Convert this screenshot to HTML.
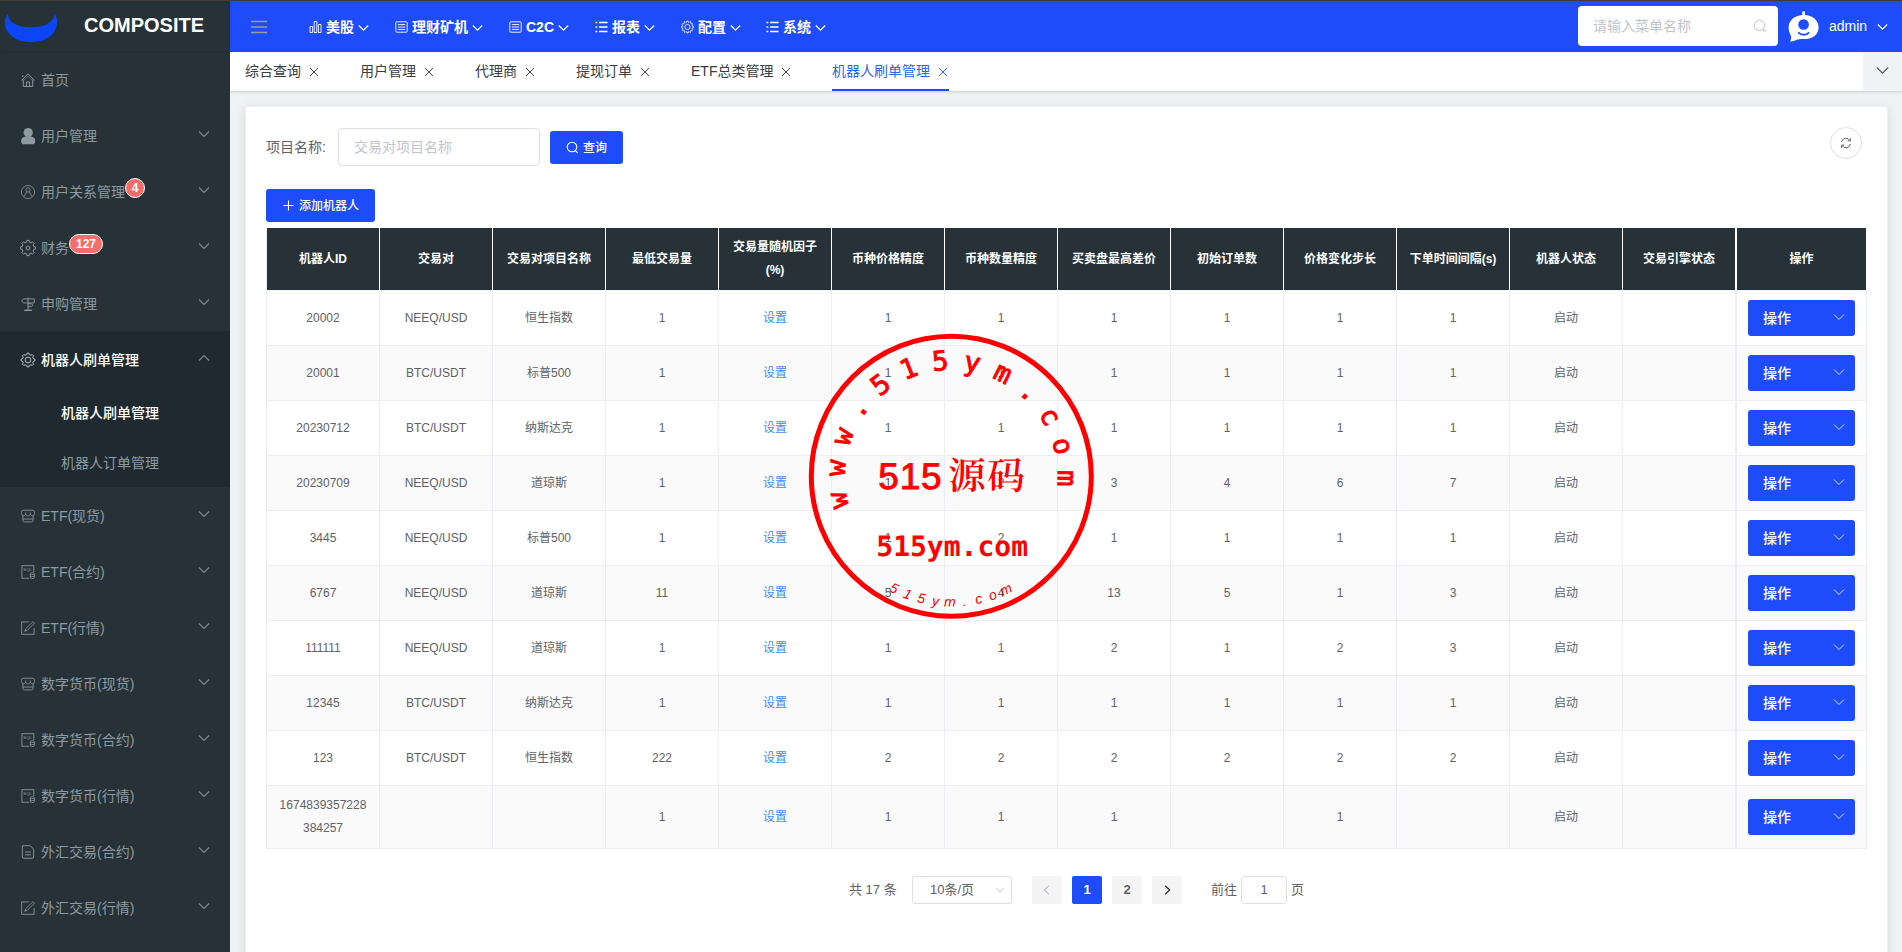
<!DOCTYPE html>
<html lang="zh-CN">
<head>
<meta charset="utf-8">
<title>COMPOSITE</title>
<style>
*{box-sizing:border-box;margin:0;padding:0}
html,body{width:1902px;height:952px;overflow:hidden}
body{font-family:"Liberation Sans","Noto Sans CJK SC",sans-serif;font-size:14px;color:#606266;background:#f0f3f4;position:relative}
.abs{position:absolute}
/* top line */
#topline{left:0;top:0;width:1902px;height:1px;background:#3c3c3c;z-index:50}
/* sidebar */
#side{left:0;top:0;width:230px;height:952px;background:#263238;z-index:10}
#logo{left:0;top:0;width:230px;height:51px;background:#263238;box-shadow:0 1px 3px rgba(0,0,0,.12)}
#logo .t{position:absolute;left:84px;top:13px;font-weight:bold;font-size:20px;line-height:24px;color:#fff;letter-spacing:0}
.mi{position:absolute;left:0;width:230px;height:56px;line-height:56px;color:#8d9aa1;font-size:14px}
.mi .ic{position:absolute;left:21px;top:22px;overflow:visible}
.mi .tx{position:absolute;left:41px;top:1px;white-space:nowrap}
.mi .ar{position:absolute;left:198px;top:23px;width:12px;height:8px;color:#7b8990}
.mi.act{color:#fff;font-weight:500}
.mi.act .ic{color:#c3c9cc}
.mi.act .ar{color:#7b8990}
.sub{position:absolute;left:0;width:230px;height:50px;line-height:52px;color:#8d9aa1;font-size:14px;padding-left:61px;white-space:nowrap}
.sub.act{color:#fff;font-weight:500}
#openbg{left:0;top:331px;width:230px;height:156px;background:#1f2a30}
.badge{position:absolute;height:20px;min-width:20px;border-radius:10px;border:1px solid #fff;background:#f56c6c;color:#fff;font-size:12px;line-height:18px;text-align:center;padding:0 5px;font-weight:bold}
/* header */
#head{left:230px;top:0;width:1672px;height:52px;background:#1f4cfb;z-index:5}
.nav{position:absolute;top:0;height:52px;line-height:54px;color:#fff;font-size:14px;font-weight:bold;white-space:nowrap}
.nav svg{position:absolute}
#search{left:1348px;top:6px;width:200px;height:40px;background:#fff;border-radius:4px}
#search .ph{position:absolute;left:15px;top:0;line-height:40px;color:#c0c4cc;font-size:14px}
/* tabs */
#tabs{left:230px;top:52px;width:1672px;height:39px;background:#fff;box-shadow:0 1px 3px 0 rgba(0,0,0,.14),0 0 3px 0 rgba(0,0,0,.04);z-index:4}
.tab{position:absolute;top:0;height:39px;line-height:39px;font-size:14px;color:#3a3c40;white-space:nowrap}
.tab .x{display:inline-block;width:14px;margin-left:5px;text-align:center;font-size:12px;color:#555}
.tab.on{color:#2f63ee}
#tabmore{left:1633px;top:0;width:39px;height:39px;background:#f0f3f4}
/* card */
#card{left:245px;top:106px;width:1643px;height:900px;background:#fff;border-radius:3px;border:1px solid #ebeef5;box-shadow:0 2px 12px 0 rgba(0,0,0,.1)}
.btn{position:absolute;background:#1f4cfb;color:#fff;border-radius:3px;font-size:12px;font-weight:500;text-align:center;white-space:nowrap}
/* table */
#tb{left:266px;top:228px;width:1601px;border-collapse:separate;border-spacing:0;table-layout:fixed;font-size:12px;border-left:1px solid #ebeef5;border-top:0}
#tb th{background:#263238;color:#fff;font-weight:bold;height:63px;border-bottom:1px solid #f3f5fa;line-height:23px;text-align:center;border-right:1px solid #fff;padding:0 10px;font-size:12px}
#tb td{height:55px;text-align:center;border-right:1px solid #ebeef5;border-bottom:1px solid #ebeef5;color:#606266;line-height:23px;padding:0 10px;position:relative}
#tb tr.s td{background:#fafafa}
#tb td a{color:#3f8cf0;text-decoration:none}
#tb tr.last td{height:63px}
#tb th:last-child,#tb td:last-child{border-left:1px solid #ebeef5}
#tb th:last-child{border-left-color:#fff}
.op{position:absolute;left:11px;top:9px;width:107px;height:36px;background:#1f4cfb;border-radius:3px;color:#fff;font-size:14px;line-height:36px;text-align:left;padding-left:15px;font-weight:500}
.op svg{position:absolute;left:85px;top:13px}
/* pagination */
.pg{position:absolute;top:876px;height:28px;line-height:28px;font-size:13px;color:#606266;white-space:nowrap}
.pb{position:absolute;top:876px;width:30px;height:28px;border-radius:2px;background:#f4f4f5;color:#606266;font-weight:bold;font-size:13px;text-align:center;line-height:28px}
</style>
</head>
<body>
<div id="topline" class="abs"></div>

<!-- SIDEBAR -->
<div id="side" class="abs">
  <div id="openbg" class="abs"></div>
  <div id="logo" class="abs">
    <svg class="abs" style="left:0;top:0" width="64" height="51" viewBox="0 0 64 51"><path d="M7.8 13.5 C4 18 3.5 27 9 33.5 C14.5 40 23 42 31 42 C39 42 47.5 40 53 33.5 C58.5 27 58 18 54.3 13.5 C54 20 49 27.2 31 27.2 C13 27.2 8 20 7.8 13.5 Z" fill="#0b45f5"/></svg>
    <div class="t">COMPOSITE</div>
  </div>
  <!-- menu items inserted below -->
  <div class="mi" style="top:51px"><svg class="ic" style="" width="14" height="14" viewBox="0 0 16 16"><path d="M0.5 8.6 L8 1 L15.5 8.6 M2 4.6 V2.6 M2.6 7.6 V15.4 H13.4 V7.6 M6.2 15.4 V10.2 H9.8 V15.4" fill="none" stroke="currentColor" stroke-width="1.1"/><path d="M1.6 10 L8 3.6 L14.4 10" fill="none" stroke="currentColor" stroke-width="0.8" opacity="0.7"/></svg><span class="tx">首页</span></div>
  <div class="mi" style="top:107px"><svg class="ic" style="left:21px;top:21px;" width="14.4" height="16.2" viewBox="0 0 16 18"><circle cx="8" cy="5" r="5.1" fill="currentColor"/><path d="M0.2 14.6 C0.2 11 2.6 9.3 8 9.3 C13.4 9.3 15.8 11 15.8 14.6 C15.8 17 14.6 18 12.6 18 H3.4 C1.4 18 0.2 17 0.2 14.6Z" fill="currentColor"/></svg><span class="tx">用户管理</span><svg class="ar" width="12" height="8" viewBox="0 0 12 8"><path d="M1 1.5 L6 6.5 L11 1.5" fill="none" stroke="currentColor" stroke-width="1.1"/></svg></div>
  <div class="mi" style="top:163px"><svg class="ic" style="" width="14" height="14" viewBox="0 0 16 16"><circle cx="8" cy="8" r="7.5" fill="none" stroke="currentColor" stroke-width="0.9"/><circle cx="8" cy="5.6" r="2.5" fill="none" stroke="currentColor" stroke-width="0.9"/><path d="M3.4 13.4 L6.6 7.8 M12.6 13.4 L9.4 7.8" fill="none" stroke="currentColor" stroke-width="0.9"/></svg><span class="tx">用户关系管理</span><span class="badge" style="left:125px;top:15px;width:20px;padding:0">4</span><svg class="ar" width="12" height="8" viewBox="0 0 12 8"><path d="M1 1.5 L6 6.5 L11 1.5" fill="none" stroke="currentColor" stroke-width="1.1"/></svg></div>
  <div class="mi" style="top:219px"><svg class="ic" style="left:20px;top:21px;" width="16" height="16" viewBox="0 0 16 16"><path d="M15.61 6.86 L15.61 9.14 L13.73 9.42 L13.05 11.04 L14.19 12.57 L12.57 14.19 L11.04 13.05 L9.42 13.73 L9.14 15.61 L6.86 15.61 L6.58 13.73 L4.96 13.05 L3.43 14.19 L1.81 12.57 L2.95 11.04 L2.27 9.42 L0.39 9.14 L0.39 6.86 L2.27 6.58 L2.95 4.96 L1.81 3.43 L3.43 1.81 L4.96 2.95 L6.58 2.27 L6.86 0.39 L9.14 0.39 L9.42 2.27 L11.04 2.95 L12.57 1.81 L14.19 3.43 L13.05 4.96 L13.73 6.58Z" fill="none" stroke="currentColor" stroke-width="1.0" stroke-linejoin="round"/><circle cx="8" cy="8" r="1.9" fill="none" stroke="currentColor" stroke-width="1.0"/></svg><span class="tx">财务</span><span class="badge" style="left:69px;top:15px;width:34px;padding:0">127</span><svg class="ar" width="12" height="8" viewBox="0 0 12 8"><path d="M1 1.5 L6 6.5 L11 1.5" fill="none" stroke="currentColor" stroke-width="1.1"/></svg></div>
  <div class="mi" style="top:275px"><svg class="ic" style="" width="14" height="14" viewBox="0 0 16 16"><path d="M8 0.6 V14.6" stroke="currentColor" stroke-width="1.2" fill="none"/><path d="M3.6 15.2 H12.4" stroke="currentColor" stroke-width="1.6" fill="none"/><path d="M8 2.2 H15.2 V6.8 H2.8 L0.8 4.5 L2.8 2.2 Z" fill="none" stroke="currentColor" stroke-width="1" stroke-linejoin="round"/><path d="M8 7.8 H11.8 L13.6 9.4 L11.8 11 H8" fill="none" stroke="currentColor" stroke-width="1" stroke-linejoin="round"/></svg><span class="tx">申购管理</span><svg class="ar" width="12" height="8" viewBox="0 0 12 8"><path d="M1 1.5 L6 6.5 L11 1.5" fill="none" stroke="currentColor" stroke-width="1.1"/></svg></div>
  <div class="mi act" style="top:331px"><svg class="ic" style="" width="14" height="14" viewBox="0 0 16 16"><path d="M15.81 6.83 L15.81 9.17 L14.11 9.52 L13.40 11.25 L14.35 12.69 L12.69 14.35 L11.25 13.40 L9.52 14.11 L9.17 15.81 L6.83 15.81 L6.48 14.11 L4.75 13.40 L3.31 14.35 L1.65 12.69 L2.60 11.25 L1.89 9.52 L0.19 9.17 L0.19 6.83 L1.89 6.48 L2.60 4.75 L1.65 3.31 L3.31 1.65 L4.75 2.60 L6.48 1.89 L6.83 0.19 L9.17 0.19 L9.52 1.89 L11.25 2.60 L12.69 1.65 L14.35 3.31 L13.40 4.75 L14.11 6.48Z" fill="none" stroke="currentColor" stroke-width="1.1" stroke-linejoin="round"/><circle cx="8" cy="8" r="3.3" fill="none" stroke="currentColor" stroke-width="1.1"/></svg><span class="tx">机器人刷单管理</span><svg class="ar" width="12" height="8" viewBox="0 0 12 8"><path d="M1 6.5 L6 1.5 L11 6.5" fill="none" stroke="currentColor" stroke-width="1.1"/></svg></div>
  <div class="sub act" style="top:387px">机器人刷单管理</div>
  <div class="sub" style="top:437px">机器人订单管理</div>
  <div class="mi" style="top:487px"><svg class="ic" style="" width="14" height="14" viewBox="0 0 16 16"><path d="M2.8 1.4 H13.2 C14.6 1.4 15.4 2.4 15.4 3.8 V5.6 C15.4 7 14.4 7.8 13.2 7.8 C12 7.8 11 7 10.6 6 C10.2 7 9.2 7.8 8 7.8 C6.8 7.8 5.8 7 5.4 6 C5 7 4 7.8 2.8 7.8 C1.6 7.8 0.6 7 0.6 5.6 V3.8 C0.6 2.4 1.4 1.4 2.8 1.4 Z M5.4 4 V6 M10.6 4 V6" fill="none" stroke="currentColor" stroke-width="1" stroke-linejoin="round"/><path d="M2.2 8 V13 C2.2 14.2 2.8 14.8 4 14.8 H12 C13.2 14.8 13.8 14.2 13.8 13 V8 M2.2 11.4 H13.8" fill="none" stroke="currentColor" stroke-width="1"/></svg><span class="tx">ETF(现货)</span><svg class="ar" width="12" height="8" viewBox="0 0 12 8"><path d="M1 1.5 L6 6.5 L11 1.5" fill="none" stroke="currentColor" stroke-width="1.1"/></svg></div>
  <div class="mi" style="top:543px"><svg class="ic" style="" width="14" height="14" viewBox="0 0 16 16"><path d="M9.6 15.2 H1 V0.8 H14.6 V8" fill="none" stroke="currentColor" stroke-width="1"/><text x="2.6" y="6.6" font-size="5" font-family="Liberation Sans,sans-serif" fill="currentColor">SQL</text><rect x="10.6" y="8.8" width="4.8" height="6.6" rx="1.8" fill="none" stroke="currentColor" stroke-width="0.9"/><path d="M10.6 11 H15.4 M10.6 13.2 H15.4" stroke="currentColor" stroke-width="0.8"/></svg><span class="tx">ETF(合约)</span><svg class="ar" width="12" height="8" viewBox="0 0 12 8"><path d="M1 1.5 L6 6.5 L11 1.5" fill="none" stroke="currentColor" stroke-width="1.1"/></svg></div>
  <div class="mi" style="top:599px"><svg class="ic" style="" width="14" height="14" viewBox="0 0 16 16"><path d="M15 8 V15.2 H0.8 V1 H9" fill="none" stroke="currentColor" stroke-width="1"/><path d="M4.2 11.8 L5.4 8.8 L13.6 0.8 L15.4 2.6 L7.2 10.6 Z" fill="none" stroke="currentColor" stroke-width="0.9" stroke-linejoin="round"/></svg><span class="tx">ETF(行情)</span><svg class="ar" width="12" height="8" viewBox="0 0 12 8"><path d="M1 1.5 L6 6.5 L11 1.5" fill="none" stroke="currentColor" stroke-width="1.1"/></svg></div>
  <div class="mi" style="top:655px"><svg class="ic" style="" width="14" height="14" viewBox="0 0 16 16"><path d="M2.8 1.4 H13.2 C14.6 1.4 15.4 2.4 15.4 3.8 V5.6 C15.4 7 14.4 7.8 13.2 7.8 C12 7.8 11 7 10.6 6 C10.2 7 9.2 7.8 8 7.8 C6.8 7.8 5.8 7 5.4 6 C5 7 4 7.8 2.8 7.8 C1.6 7.8 0.6 7 0.6 5.6 V3.8 C0.6 2.4 1.4 1.4 2.8 1.4 Z M5.4 4 V6 M10.6 4 V6" fill="none" stroke="currentColor" stroke-width="1" stroke-linejoin="round"/><path d="M2.2 8 V13 C2.2 14.2 2.8 14.8 4 14.8 H12 C13.2 14.8 13.8 14.2 13.8 13 V8 M2.2 11.4 H13.8" fill="none" stroke="currentColor" stroke-width="1"/></svg><span class="tx">数字货币(现货)</span><svg class="ar" width="12" height="8" viewBox="0 0 12 8"><path d="M1 1.5 L6 6.5 L11 1.5" fill="none" stroke="currentColor" stroke-width="1.1"/></svg></div>
  <div class="mi" style="top:711px"><svg class="ic" style="" width="14" height="14" viewBox="0 0 16 16"><path d="M9.6 15.2 H1 V0.8 H14.6 V8" fill="none" stroke="currentColor" stroke-width="1"/><text x="2.6" y="6.6" font-size="5" font-family="Liberation Sans,sans-serif" fill="currentColor">SQL</text><rect x="10.6" y="8.8" width="4.8" height="6.6" rx="1.8" fill="none" stroke="currentColor" stroke-width="0.9"/><path d="M10.6 11 H15.4 M10.6 13.2 H15.4" stroke="currentColor" stroke-width="0.8"/></svg><span class="tx">数字货币(合约)</span><svg class="ar" width="12" height="8" viewBox="0 0 12 8"><path d="M1 1.5 L6 6.5 L11 1.5" fill="none" stroke="currentColor" stroke-width="1.1"/></svg></div>
  <div class="mi" style="top:767px"><svg class="ic" style="" width="14" height="14" viewBox="0 0 16 16"><path d="M9.6 15.2 H1 V0.8 H14.6 V8" fill="none" stroke="currentColor" stroke-width="1"/><text x="2.6" y="6.6" font-size="5" font-family="Liberation Sans,sans-serif" fill="currentColor">SQL</text><rect x="10.6" y="8.8" width="4.8" height="6.6" rx="1.8" fill="none" stroke="currentColor" stroke-width="0.9"/><path d="M10.6 11 H15.4 M10.6 13.2 H15.4" stroke="currentColor" stroke-width="0.8"/></svg><span class="tx">数字货币(行情)</span><svg class="ar" width="12" height="8" viewBox="0 0 12 8"><path d="M1 1.5 L6 6.5 L11 1.5" fill="none" stroke="currentColor" stroke-width="1.1"/></svg></div>
  <div class="mi" style="top:823px"><svg class="ic" style="" width="14" height="14" viewBox="0 0 16 16"><path d="M1.6 0.8 H10.6 L14.4 4.6 V13.8 C14.4 14.8 13.8 15.2 13 15.2 H3 C2.2 15.2 1.6 14.8 1.6 13.8 Z M4.6 8 H11.4 M4.6 11.2 H11.4" fill="none" stroke="currentColor" stroke-width="1.05" stroke-linejoin="round"/></svg><span class="tx">外汇交易(合约)</span><svg class="ar" width="12" height="8" viewBox="0 0 12 8"><path d="M1 1.5 L6 6.5 L11 1.5" fill="none" stroke="currentColor" stroke-width="1.1"/></svg></div>
  <div class="mi" style="top:879px"><svg class="ic" style="" width="14" height="14" viewBox="0 0 16 16"><path d="M15 8 V15.2 H0.8 V1 H9" fill="none" stroke="currentColor" stroke-width="1"/><path d="M4.2 11.8 L5.4 8.8 L13.6 0.8 L15.4 2.6 L7.2 10.6 Z" fill="none" stroke="currentColor" stroke-width="0.9" stroke-linejoin="round"/></svg><span class="tx">外汇交易(行情)</span><svg class="ar" width="12" height="8" viewBox="0 0 12 8"><path d="M1 1.5 L6 6.5 L11 1.5" fill="none" stroke="currentColor" stroke-width="1.1"/></svg></div>
</div>

<!-- HEADER -->
<div id="head" class="abs">
  <svg class="abs" style="left:21px;top:20px" width="16" height="14" viewBox="0 0 16 14"><path d="M0 1.5 H16 M0 7 H16 M0 12.5 H16" stroke="#9a9a9a" stroke-width="1.3"/></svg>
  <div class="nav" style="left:79px;width:60px"><svg style="left:0;top:20px" width="13" height="14" viewBox="0 0 13 14"><path d="M1 6.5 H3.6 V12.5 H1 Z M5.2 1.5 H7.8 V12.5 H5.2 Z M9.4 4.5 H12 V12.5 H9.4 Z" fill="none" stroke="#fff" stroke-width="0.9" stroke-linejoin="round"/></svg><span style="position:absolute;left:17px;top:0">美股</span><svg style="left:49px;top:24px" width="11" height="8" viewBox="0 0 11 8"><path d="M0.8 1.5 L5.5 6.2 L10.2 1.5" fill="none" stroke="#fff" stroke-width="1.2"/></svg></div>
  <div class="nav" style="left:165px;width:88px"><svg style="left:0;top:20px" width="13" height="14" viewBox="0 0 13 14"><rect x="0.8" y="1.8" width="11.4" height="10.4" rx="0.8" fill="none" stroke="#fff" stroke-width="0.9"/><path d="M2.8 4.6 H10.2 M2.8 7 H10.2 M2.8 9.4 H10.2" stroke="#fff" stroke-width="0.9"/></svg><span style="position:absolute;left:17px;top:0">理财矿机</span><svg style="left:77px;top:24px" width="11" height="8" viewBox="0 0 11 8"><path d="M0.8 1.5 L5.5 6.2 L10.2 1.5" fill="none" stroke="#fff" stroke-width="1.2"/></svg></div>
  <div class="nav" style="left:279px;width:60px"><svg style="left:0;top:20px" width="13" height="14" viewBox="0 0 13 14"><rect x="0.8" y="1.8" width="11.4" height="10.4" rx="0.8" fill="none" stroke="#fff" stroke-width="0.9"/><path d="M2.8 4.6 H10.2 M2.8 7 H10.2 M2.8 9.4 H10.2" stroke="#fff" stroke-width="0.9"/></svg><span style="position:absolute;left:17px;top:0">C2C</span><svg style="left:49px;top:24px" width="11" height="8" viewBox="0 0 11 8"><path d="M0.8 1.5 L5.5 6.2 L10.2 1.5" fill="none" stroke="#fff" stroke-width="1.2"/></svg></div>
  <div class="nav" style="left:365px;width:60px"><svg style="left:0;top:20px" width="13" height="14" viewBox="0 0 13 14"><path d="M0.5 2.5 H2.3 M4 2.5 H12.5 M0.5 7 H2.3 M4 7 H12.5 M0.5 11.5 H2.3 M4 11.5 H12.5" stroke="#fff" stroke-width="1.7"/></svg><span style="position:absolute;left:17px;top:0">报表</span><svg style="left:49px;top:24px" width="11" height="8" viewBox="0 0 11 8"><path d="M0.8 1.5 L5.5 6.2 L10.2 1.5" fill="none" stroke="#fff" stroke-width="1.2"/></svg></div>
  <div class="nav" style="left:451px;width:60px"><svg style="left:0;top:20px" width="13" height="14" viewBox="0 0 13 14"><path d="M12.47 6.40 L12.47 7.60 L11.34 7.79 L11.08 8.73 L11.97 9.47 L11.37 10.50 L10.29 10.10 L9.60 10.79 L10.00 11.87 L8.97 12.47 L8.23 11.58 L7.29 11.84 L7.10 12.97 L5.90 12.97 L5.71 11.84 L4.77 11.58 L4.03 12.47 L3.00 11.87 L3.40 10.79 L2.71 10.10 L1.63 10.50 L1.03 9.47 L1.92 8.73 L1.66 7.79 L0.53 7.60 L0.53 6.40 L1.66 6.21 L1.92 5.27 L1.03 4.53 L1.63 3.50 L2.71 3.90 L3.40 3.21 L3.00 2.13 L4.03 1.53 L4.77 2.42 L5.71 2.16 L5.90 1.03 L7.10 1.03 L7.29 2.16 L8.23 2.42 L8.97 1.53 L10.00 2.13 L9.60 3.21 L10.29 3.90 L11.37 3.50 L11.97 4.53 L11.08 5.27 L11.34 6.21Z" fill="none" stroke="#fff" stroke-width="0.8" stroke-linejoin="round"/><circle cx="6.5" cy="7" r="2.6" fill="none" stroke="#fff" stroke-width="0.8"/></svg><span style="position:absolute;left:17px;top:0">配置</span><svg style="left:49px;top:24px" width="11" height="8" viewBox="0 0 11 8"><path d="M0.8 1.5 L5.5 6.2 L10.2 1.5" fill="none" stroke="#fff" stroke-width="1.2"/></svg></div>
  <div class="nav" style="left:536px;width:60px"><svg style="left:0;top:20px" width="13" height="14" viewBox="0 0 13 14"><path d="M0.5 2.5 H2.3 M4 2.5 H12.5 M0.5 7 H2.3 M4 7 H12.5 M0.5 11.5 H2.3 M4 11.5 H12.5" stroke="#fff" stroke-width="1.7"/></svg><span style="position:absolute;left:17px;top:0">系统</span><svg style="left:49px;top:24px" width="11" height="8" viewBox="0 0 11 8"><path d="M0.8 1.5 L5.5 6.2 L10.2 1.5" fill="none" stroke="#fff" stroke-width="1.2"/></svg></div>
  <div id="search" class="abs"><span class="ph">请输入菜单名称</span><svg class="abs" style="left:175px;top:13px" width="14" height="14" viewBox="0 0 14 14"><circle cx="6.4" cy="6.4" r="5.2" fill="none" stroke="#c0c4cc" stroke-width="1"/><path d="M10.2 10.4 L12.6 12.8" stroke="#c0c4cc" stroke-width="1.1"/></svg></div>
  <svg class="abs" style="left:1557px;top:10px" width="33" height="33" viewBox="0 0 33 33"><path d="M16.6 1.4 V6" stroke="#fff" stroke-width="2.6"/><path d="M16.8 5 C25.8 5 31.6 10.4 31.6 17.4 C31.6 24.6 25.6 29 17.6 29 C14.6 29 12 28.8 9.6 29.8 C7.4 30.8 5 31.6 3 31.4 C4.2 29.4 4.6 27.4 3.6 25 C2.4 22.6 1.6 20.2 1.6 17.4 C1.6 10.4 7.8 5 16.8 5 Z" fill="#fff"/><circle cx="16.6" cy="14.5" r="5.3" fill="#1f4cfb"/><path d="M11.8 22.8 C13.6 25.4 19.8 25.4 21.6 22.8" fill="none" stroke="#1f4cfb" stroke-width="1.8" stroke-linecap="round"/></svg>
  <div class="abs" style="left:1599px;top:0;line-height:53px;color:#fff;font-size:14px">admin</div>
  <svg class="abs" style="left:1647px;top:23px" width="11" height="8" viewBox="0 0 11 8"><path d="M0.8 1.5 L5.5 6.2 L10.2 1.5" fill="none" stroke="#fff" stroke-width="1.2"/></svg>
</div>

<!-- TABS -->
<div id="tabs" class="abs">
  <div class="tab" style="left:15px">综合查询<svg style="display:inline-block;vertical-align:-1px;margin-left:8px" width="10" height="10" viewBox="0 0 10 10"><path d="M1 1 L9 9 M9 1 L1 9" stroke="#444" stroke-width="1"/></svg></div>
  <div class="tab" style="left:130px">用户管理<svg style="display:inline-block;vertical-align:-1px;margin-left:8px" width="10" height="10" viewBox="0 0 10 10"><path d="M1 1 L9 9 M9 1 L1 9" stroke="#444" stroke-width="1"/></svg></div>
  <div class="tab" style="left:245px">代理商<svg style="display:inline-block;vertical-align:-1px;margin-left:8px" width="10" height="10" viewBox="0 0 10 10"><path d="M1 1 L9 9 M9 1 L1 9" stroke="#444" stroke-width="1"/></svg></div>
  <div class="tab" style="left:346px">提现订单<svg style="display:inline-block;vertical-align:-1px;margin-left:8px" width="10" height="10" viewBox="0 0 10 10"><path d="M1 1 L9 9 M9 1 L1 9" stroke="#444" stroke-width="1"/></svg></div>
  <div class="tab" style="left:461px">ETF总类管理<svg style="display:inline-block;vertical-align:-1px;margin-left:8px" width="10" height="10" viewBox="0 0 10 10"><path d="M1 1 L9 9 M9 1 L1 9" stroke="#444" stroke-width="1"/></svg></div>
  <div class="tab on" style="left:602px">机器人刷单管理<svg style="display:inline-block;vertical-align:-1px;margin-left:8px" width="10" height="10" viewBox="0 0 10 10"><path d="M1 1 L9 9 M9 1 L1 9" stroke="#2f63ee" stroke-width="1"/></svg></div>
  <div class="abs" style="left:602px;top:37px;width:117px;height:2px;background:#1f4cfb"></div>
  <div id="tabmore" class="abs"><svg class="abs" style="left:13px;top:14px" width="13" height="9" viewBox="0 0 13 9"><path d="M0.8 1.5 L6.5 7.2 L12.2 1.5" fill="none" stroke="#555" stroke-width="1.1"/></svg></div>
</div>

<!-- CARD -->
<div id="card" class="abs"></div>
<div class="abs" style="left:266px;top:128px;line-height:38px;font-size:14px;color:#606266">项目名称:</div>
<div class="abs" style="left:338px;top:128px;width:202px;height:38px;border:1px solid #dcdfe6;border-radius:4px;background:#fff"><span style="position:absolute;left:15px;top:0;line-height:36px;color:#c0c4cc;font-size:14px">交易对项目名称</span></div>
<div class="btn" style="left:550px;top:131px;width:73px;height:33px;line-height:35px"><svg style="position:absolute;left:16px;top:10px" width="13" height="13" viewBox="0 0 13 13"><circle cx="6" cy="6" r="4.8" fill="none" stroke="#fff" stroke-width="1.1"/><path d="M9.4 9.6 L11.6 11.8" stroke="#fff" stroke-width="1.2"/></svg><span style="position:absolute;left:33px;top:0">查询</span></div>
<div class="abs" style="left:1830px;top:127px;width:32px;height:32px;border:1px solid #dcdfe6;border-radius:16px;background:#fff"><svg style="position:absolute;left:9px;top:9px" width="12" height="12" viewBox="0 0 12 12"><path d="M1.6 5 A4.5 4.5 0 0 1 10 3.6 M10.4 7 A4.5 4.5 0 0 1 2 8.4" fill="none" stroke="#606266" stroke-width="1"/><path d="M10.4 1.2 V3.9 H7.7 M1.6 10.8 V8.1 H4.3" fill="none" stroke="#606266" stroke-width="1"/></svg></div>
<div class="btn" style="left:266px;top:189px;width:109px;height:33px;line-height:35px"><svg style="position:absolute;left:17px;top:11px" width="11" height="11" viewBox="0 0 11 11"><path d="M5.5 0.5 V10.5 M0.5 5.5 H10.5" stroke="#fff" stroke-width="1.1"/></svg><span style="position:absolute;left:33px;top:0">添加机器人</span></div>
<table id="tb" class="abs"><colgroup><col style="width:113px"><col style="width:113px"><col style="width:113px"><col style="width:113px"><col style="width:113px"><col style="width:113px"><col style="width:113px"><col style="width:113px"><col style="width:113px"><col style="width:113px"><col style="width:113px"><col style="width:113px"><col style="width:113px"><col style="width:131px"></colgroup>
<thead><tr><th>机器人ID</th><th>交易对</th><th>交易对项目名称</th><th>最低交易量</th><th>交易量随机因子<br>(%)</th><th>币种价格精度</th><th>币种数量精度</th><th>买卖盘最高差价</th><th>初始订单数</th><th>价格变化步长</th><th>下单时间间隔(s)</th><th>机器人状态</th><th>交易引擎状态</th><th>操作</th></tr></thead>
<tbody>
<tr class=""><td>20002</td><td>NEEQ/USD</td><td>恒生指数</td><td>1</td><td><a>设置</a></td><td>1</td><td>1</td><td>1</td><td>1</td><td>1</td><td>1</td><td>启动</td><td></td><td><div class="op" style="top:9px">操作<svg width="12" height="8" viewBox="0 0 12 8"><path d="M1 1.5 L6 6.5 L11 1.5" fill="none" stroke="#d3dbfd" stroke-width="1"/></svg></div></td></tr>
<tr class="s"><td>20001</td><td>BTC/USDT</td><td>标普500</td><td>1</td><td><a>设置</a></td><td>1</td><td>1</td><td>1</td><td>1</td><td>1</td><td>1</td><td>启动</td><td></td><td><div class="op" style="top:9px">操作<svg width="12" height="8" viewBox="0 0 12 8"><path d="M1 1.5 L6 6.5 L11 1.5" fill="none" stroke="#d3dbfd" stroke-width="1"/></svg></div></td></tr>
<tr class=""><td>20230712</td><td>BTC/USDT</td><td>纳斯达克</td><td>1</td><td><a>设置</a></td><td>1</td><td>1</td><td>1</td><td>1</td><td>1</td><td>1</td><td>启动</td><td></td><td><div class="op" style="top:9px">操作<svg width="12" height="8" viewBox="0 0 12 8"><path d="M1 1.5 L6 6.5 L11 1.5" fill="none" stroke="#d3dbfd" stroke-width="1"/></svg></div></td></tr>
<tr class="s"><td>20230709</td><td>NEEQ/USD</td><td>道琼斯</td><td>1</td><td><a>设置</a></td><td>1</td><td>2</td><td>3</td><td>4</td><td>6</td><td>7</td><td>启动</td><td></td><td><div class="op" style="top:9px">操作<svg width="12" height="8" viewBox="0 0 12 8"><path d="M1 1.5 L6 6.5 L11 1.5" fill="none" stroke="#d3dbfd" stroke-width="1"/></svg></div></td></tr>
<tr class=""><td>3445</td><td>NEEQ/USD</td><td>标普500</td><td>1</td><td><a>设置</a></td><td>1</td><td>2</td><td>1</td><td>1</td><td>1</td><td>1</td><td>启动</td><td></td><td><div class="op" style="top:9px">操作<svg width="12" height="8" viewBox="0 0 12 8"><path d="M1 1.5 L6 6.5 L11 1.5" fill="none" stroke="#d3dbfd" stroke-width="1"/></svg></div></td></tr>
<tr class="s"><td>6767</td><td>NEEQ/USD</td><td>道琼斯</td><td>11</td><td><a>设置</a></td><td>5</td><td>4</td><td>13</td><td>5</td><td>1</td><td>3</td><td>启动</td><td></td><td><div class="op" style="top:9px">操作<svg width="12" height="8" viewBox="0 0 12 8"><path d="M1 1.5 L6 6.5 L11 1.5" fill="none" stroke="#d3dbfd" stroke-width="1"/></svg></div></td></tr>
<tr class=""><td>111111</td><td>NEEQ/USD</td><td>道琼斯</td><td>1</td><td><a>设置</a></td><td>1</td><td>1</td><td>2</td><td>1</td><td>2</td><td>3</td><td>启动</td><td></td><td><div class="op" style="top:9px">操作<svg width="12" height="8" viewBox="0 0 12 8"><path d="M1 1.5 L6 6.5 L11 1.5" fill="none" stroke="#d3dbfd" stroke-width="1"/></svg></div></td></tr>
<tr class="s"><td>12345</td><td>BTC/USDT</td><td>纳斯达克</td><td>1</td><td><a>设置</a></td><td>1</td><td>1</td><td>1</td><td>1</td><td>1</td><td>1</td><td>启动</td><td></td><td><div class="op" style="top:9px">操作<svg width="12" height="8" viewBox="0 0 12 8"><path d="M1 1.5 L6 6.5 L11 1.5" fill="none" stroke="#d3dbfd" stroke-width="1"/></svg></div></td></tr>
<tr class=""><td>123</td><td>BTC/USDT</td><td>恒生指数</td><td>222</td><td><a>设置</a></td><td>2</td><td>2</td><td>2</td><td>2</td><td>2</td><td>2</td><td>启动</td><td></td><td><div class="op" style="top:9px">操作<svg width="12" height="8" viewBox="0 0 12 8"><path d="M1 1.5 L6 6.5 L11 1.5" fill="none" stroke="#d3dbfd" stroke-width="1"/></svg></div></td></tr>
<tr class="s last"><td>1674839357228<br>384257</td><td></td><td></td><td>1</td><td><a>设置</a></td><td>1</td><td>1</td><td>1</td><td></td><td>1</td><td></td><td>启动</td><td></td><td><div class="op" style="top:13px">操作<svg width="12" height="8" viewBox="0 0 12 8"><path d="M1 1.5 L6 6.5 L11 1.5" fill="none" stroke="#d3dbfd" stroke-width="1"/></svg></div></td></tr>
</tbody></table>
<div class="pg" style="left:849px">共 17 条</div>
<div class="abs" style="left:912px;top:876px;width:100px;height:28px;border:1px solid #dcdfe6;border-radius:3px;background:#fff;font-size:13px;line-height:26px;color:#606266"><span style="position:absolute;left:17px">10条/页</span><svg style="position:absolute;left:82px;top:10px" width="10" height="7" viewBox="0 0 10 7"><path d="M1 1.2 L5 5.2 L9 1.2" fill="none" stroke="#c0c4cc" stroke-width="1"/></svg></div>
<div class="pb" style="left:1032px"><svg style="position:absolute;left:11px;top:9px" width="7" height="10" viewBox="0 0 7 10"><path d="M5.8 0.8 L1.4 5 L5.8 9.2" fill="none" stroke="#c0c4cc" stroke-width="1.3"/></svg></div>
<div class="pb" style="left:1072px;background:#1f4cfb;color:#fff">1</div>
<div class="pb" style="left:1112px">2</div>
<div class="pb" style="left:1152px"><svg style="position:absolute;left:12px;top:9px" width="7" height="10" viewBox="0 0 7 10"><path d="M1.2 0.8 L5.6 5 L1.2 9.2" fill="none" stroke="#303133" stroke-width="1.3"/></svg></div>
<div class="pg" style="left:1211px">前往</div>
<div class="abs" style="left:1241px;top:876px;width:46px;height:28px;border:1px solid #dcdfe6;border-radius:3px;background:#fff;font-size:13px;line-height:26px;color:#606266;text-align:center">1</div>
<div class="pg" style="left:1291px">页</div>
<svg class="abs" style="left:801px;top:326px;z-index:20;text-rendering:geometricPrecision" width="300" height="300" viewBox="-150.3 -150.3 300 300">
<circle cx="0" cy="0" r="140" fill="none" stroke="#ff0000" stroke-width="5"/>
<text x="-102.6 -106.9 -102.9 -90.8 -71.6 -46.8 -18.3 11.5 40.5 66.3 87.0 100.8 106.7" y="30.1 0.5 -29.1 -56.5 -79.4 -96.1 -105.3 -106.3 -98.9 -83.8 -62.2 -35.7 -6.3" rotate="258.0 274.1 290.2 306.2 322.3 338.4 354.5 10.6 26.6 42.7 58.8 74.9 91.0" font-family="DejaVu Sans Mono,Liberation Mono,monospace" font-size="27" fill="#ff0000" stroke="#ff0000" stroke-width="1">www.515ym.com</text>
<text y="13" font-size="37" fill="#ff0000"><tspan x="-73" font-family="Liberation Sans,sans-serif" stroke="#ff0000" stroke-width="0.9" letter-spacing="0.8">515</tspan><tspan x="-3" font-family="Liberation Serif,Noto Serif CJK SC,serif" font-weight="600" font-size="37.5" letter-spacing="1.5">源码</tspan></text>
<text x="-75" y="80" font-family="DejaVu Sans Mono,Liberation Mono,monospace" font-weight="bold" font-size="28" fill="#ff0000">515ym.com</text>
<text x="-62.7 -49.1 -34.9 -19.8 -7.2 11.7 25.0 39.2 51.5" y="114.4 120.9 125.7 128.9 130.3 129.9 128.0 124.4 119.9" rotate="27.0 20.4 13.8 7.2 0.6 354.0 347.4 340.8 334.2" font-family="Liberation Sans,sans-serif" font-style="italic" font-size="14" fill="#ff0000">515ym.com</text>
</svg>

</body>
</html>
